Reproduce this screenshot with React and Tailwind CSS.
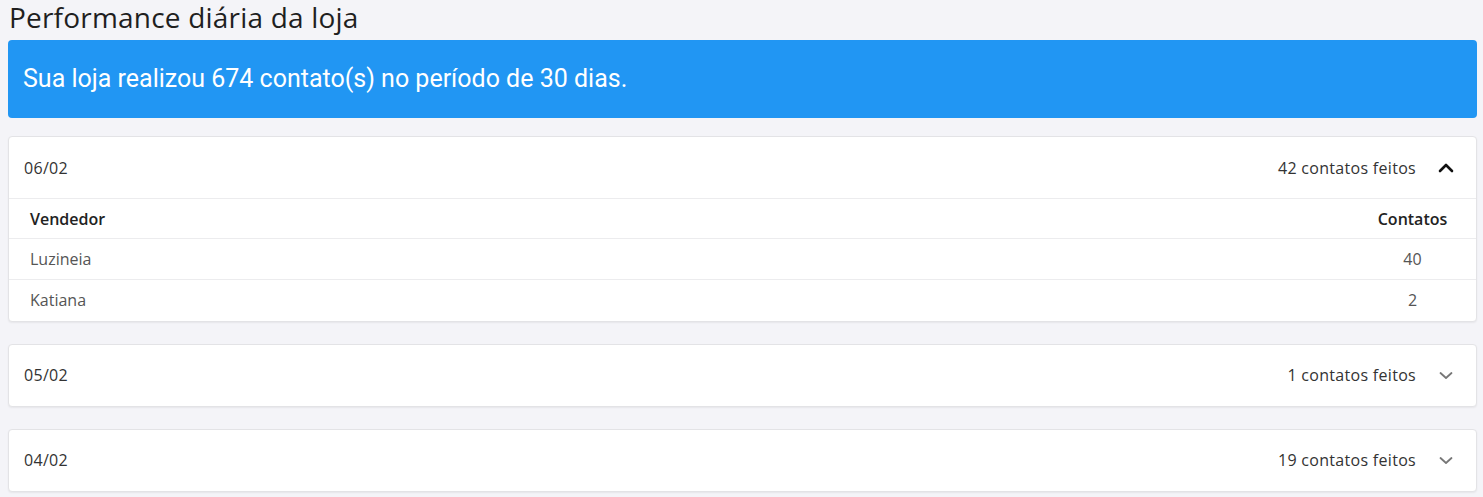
import React from 'react';

const days = [
  {
    date: '06/02',
    total: 42,
    open: true,
    rows: [
      { name: 'Luzineia', count: 40 },
      { name: 'Katiana', count: 2 },
    ],
  },
  { date: '05/02', total: 1, open: false, rows: [] },
  { date: '04/02', total: 19, open: false, rows: [] },
];

const Chevron = ({ up }) => (
  <svg
    width="16"
    height="10"
    viewBox="0 0 16 10"
    fill="none"
    stroke={up ? '#111' : '#777'}
    strokeWidth={up ? 2.6 : 1.8}
    strokeLinecap="round"
    strokeLinejoin="round"
  >
    {up ? <path d="M2 8l6-6 6 6" /> : <path d="M2.5 3l5.5 5 5.5-5" />}
  </svg>
);

export default function App() {
  return (
    <div className="min-h-screen bg-[#f4f4f8] pl-2 pr-[6px] pb-4" style={{ fontFamily: '"Open Sans", "Noto Sans", sans-serif' }}>
      {/* Title */}
      <h1 className="pl-px text-[28px] leading-[35px] text-[#1f1f1f] font-medium tracking-[0.2px]">
        Performance diária da loja
      </h1>

      {/* Banner */}
      <div
        className="mt-[5px] h-[78px] rounded-[4px] bg-[#2196f3] flex items-center px-[15px] text-white text-[25px]"
        style={{ fontFamily: 'Roboto, sans-serif' }}
      >
        Sua loja realizou 674 contato(s) no período de 30 dias.
      </div>

      <div className="mt-[18px] flex flex-col gap-[22px]">
        {days.map((d) => (
          <div
            key={d.date}
            className="bg-white border border-[#e3e3e6] rounded-[4px] shadow-[0_1px_2px_rgba(0,0,0,0.06)]"
          >
            <div className="h-[61px] flex items-center justify-between pl-[15px] pr-[22px] text-[16px] tracking-[0.3px] text-[#333]">
              <span>{d.date}</span>
              <div className="flex items-center gap-[22px]">
                <span>{d.total} contatos feitos</span>
                <Chevron up={d.open} />
              </div>
            </div>
            {d.open && (
              <table className="w-full text-[16px] text-[#555]">
                <thead>
                  <tr className="border-t border-[#ececee] h-[40px]">
                    <th className="text-left pl-[21px] font-semibold text-[#222]">Vendedor</th>
                    <th className="text-center pr-[27px] w-[100px] font-semibold text-[#222]">Contatos</th>
                  </tr>
                </thead>
                <tbody>
                  {d.rows.map((r) => (
                    <tr key={r.name} className="border-t border-[#ececee] h-[41px]">
                      <td className="pl-[21px]">{r.name}</td>
                      <td className="text-center pr-[27px]">{r.count}</td>
                    </tr>
                  ))}
                </tbody>
              </table>
            )}
          </div>
        ))}
      </div>
    </div>
  );
}
